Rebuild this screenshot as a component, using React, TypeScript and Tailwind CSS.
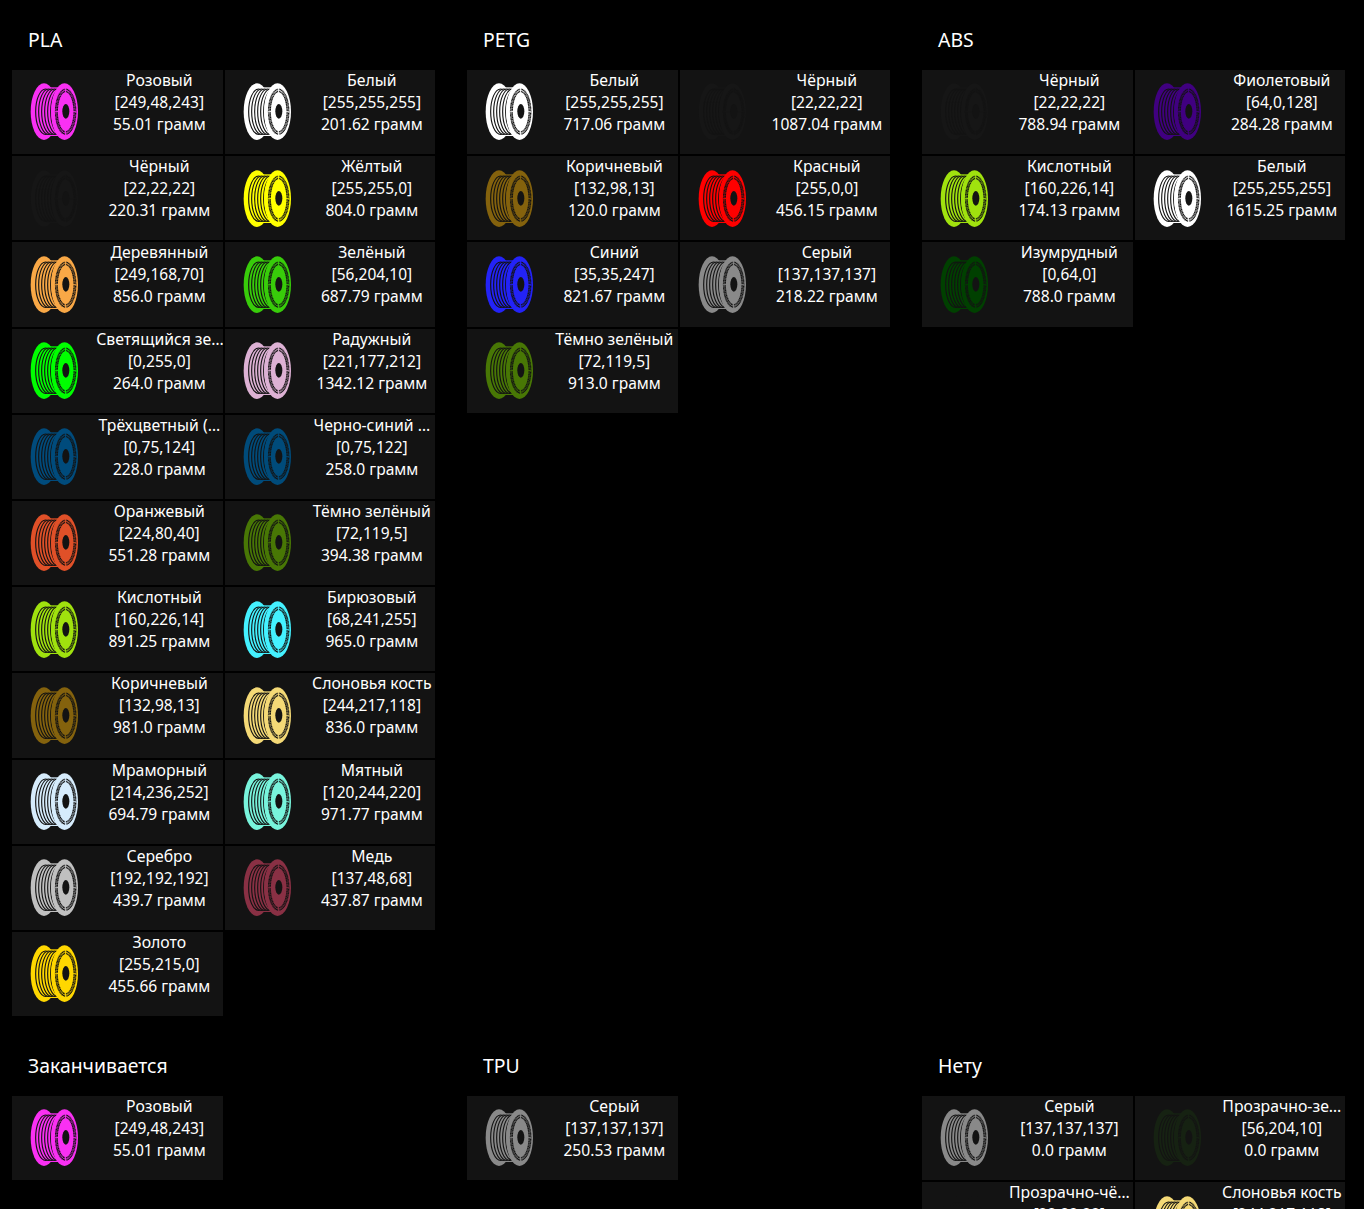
type Filament = { name: string; rgb: string; grams: string; alpha?: number };
type Group = { title: string; items: Filament[] };

const f = (name: string, rgb: string, grams: string, alpha = 1): Filament => ({ name, rgb, grams, alpha });

const groups: Group[] = [
  {
    title: "PLA",
    items: [
      f("Розовый", "249,48,243", "55.01"),
      f("Белый", "255,255,255", "201.62"),
      f("Чёрный", "22,22,22", "220.31"),
      f("Жёлтый", "255,255,0", "804.0"),
      f("Деревянный", "249,168,70", "856.0"),
      f("Зелёный", "56,204,10", "687.79"),
      f("Светящийся зе…", "0,255,0", "264.0"),
      f("Радужный", "221,177,212", "1342.12"),
      f("Трёхцветный (…", "0,75,124", "228.0"),
      f("Черно-синий …", "0,75,122", "258.0"),
      f("Оранжевый", "224,80,40", "551.28"),
      f("Тёмно зелёный", "72,119,5", "394.38"),
      f("Кислотный", "160,226,14", "891.25"),
      f("Бирюзовый", "68,241,255", "965.0"),
      f("Коричневый", "132,98,13", "981.0"),
      f("Слоновья кость", "244,217,118", "836.0"),
      f("Мраморный", "214,236,252", "694.79"),
      f("Мятный", "120,244,220", "971.77"),
      f("Серебро", "192,192,192", "439.7"),
      f("Медь", "137,48,68", "437.87"),
      f("Золото", "255,215,0", "455.66"),
    ],
  },
  {
    title: "PETG",
    items: [
      f("Белый", "255,255,255", "717.06"),
      f("Чёрный", "22,22,22", "1087.04"),
      f("Коричневый", "132,98,13", "120.0"),
      f("Красный", "255,0,0", "456.15"),
      f("Синий", "35,35,247", "821.67"),
      f("Серый", "137,137,137", "218.22"),
      f("Тёмно зелёный", "72,119,5", "913.0"),
    ],
  },
  {
    title: "ABS",
    items: [
      f("Чёрный", "22,22,22", "788.94"),
      f("Фиолетовый", "64,0,128", "284.28"),
      f("Кислотный", "160,226,14", "174.13"),
      f("Белый", "255,255,255", "1615.25"),
      f("Изумрудный", "0,64,0", "788.0"),
    ],
  },
  { title: "Заканчивается", items: [f("Розовый", "249,48,243", "55.01")] },
  { title: "TPU", items: [f("Серый", "137,137,137", "250.53")] },
  {
    title: "Нету",
    items: [
      f("Серый", "137,137,137", "0.0"),
      f("Прозрачно-зе…", "56,204,10", "0.0", 0.08),
      f("Прозрачно-чё…", "22,22,22", "0.0", 0.1),
      f("Слоновья кость", "244,217,118", "0.0"),
    ],
  },
];

function Spool({ color, alpha }: { color: string; alpha?: number }) {
  const bg = "#131313";
  return (
    <svg viewBox="0 0 252.6 252.6" className="mt-[0.4px] size-[84.2px] shrink-0" fill={`rgb(${color})`} opacity={alpha}>
      <ellipse cx="96" cy="125" rx="40" ry="85" />
      <rect x="104" y="52" width="40" height="146" />
      {[101, 110, 119, 128, 137, 146].map((cx) => (
        <ellipse key={cx} cx={cx} cy="125" rx="30" ry="68" stroke={bg} strokeWidth="3.4" />
      ))}
      <ellipse cx="157.5" cy="125" rx="40.5" ry="85" />
      <ellipse cx="161" cy="125" rx="30" ry="67" fill="none" stroke={bg} strokeWidth="4.5" strokeDasharray="3 1" />
      <ellipse cx="161" cy="125" rx="25.5" ry="60.5" fill="none" stroke={bg} strokeWidth="4.5" strokeDasharray="4 1" />
      <path d="M128 123.5h65v3h-65zM159.5 53h3v16h-3zM159.5 181h3v16h-3z" />
      <ellipse cx="161.5" cy="124" rx="10.5" ry="22" fill={bg} />
    </svg>
  );
}

function Card({ item }: { item: Filament }) {
  return (
    <div className="flex h-[84.2px] overflow-hidden bg-[#131313]">
      <Spool color={item.rgb} alpha={item.alpha} />
      <div className="-mt-px min-w-0 flex-1 text-center leading-[22px] whitespace-nowrap">
        <div className="text-[15.8px]">{item.name}</div>
        <div className="text-[15.5px]">[{item.rgb}]</div>
        <div className="text-[15.6px]">{item.grams} грамм</div>
      </div>
    </div>
  );
}

export default function App() {
  return (
    <main className="grid h-[1209px] w-[1364px] grid-cols-[423px_423px_423px] content-start gap-x-8 overflow-hidden bg-black pl-3 font-['Noto_Sans','Open_Sans',sans-serif] text-white">
      {groups.map((g) => (
        <section key={g.title} className="pb-2.5">
          <h2 className="flex h-[70px] items-center pt-[9px] pl-4 text-[19.4px] leading-7">{g.title}</h2>
          <div className="grid grid-cols-2 gap-0.5">
            {g.items.map((item, i) => (
              <Card key={i} item={item} />
            ))}
          </div>
        </section>
      ))}
    </main>
  );
}
